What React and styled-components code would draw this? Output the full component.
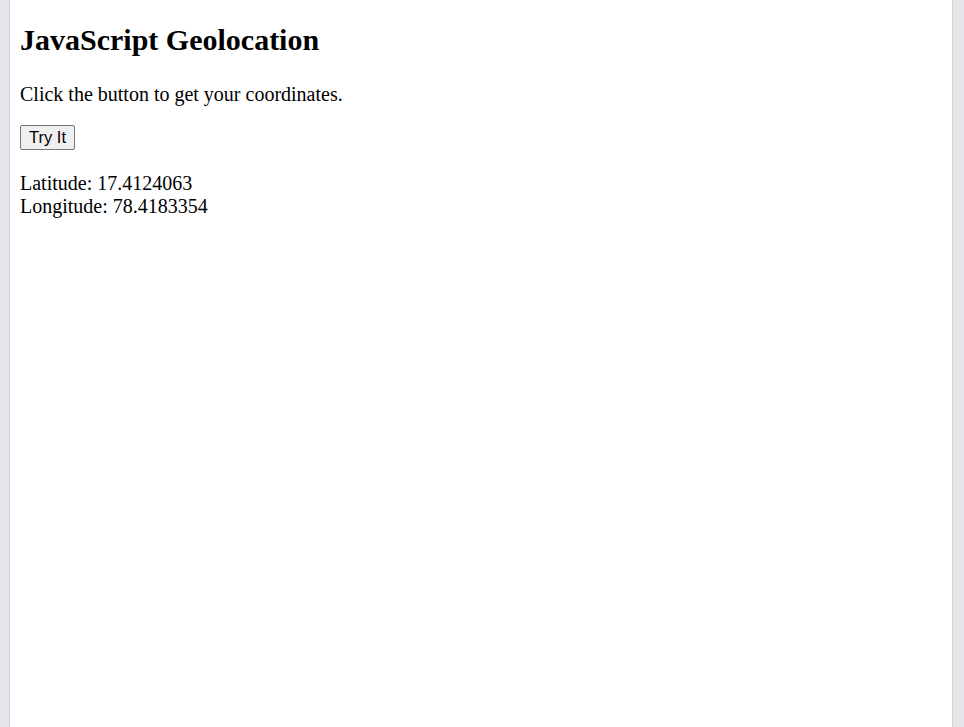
import React, { useState } from 'react';
import styled, { createGlobalStyle } from 'styled-components';

const GlobalStyle = createGlobalStyle`
  html, body {
    margin: 0;
    padding: 0;
    background: #e6e7ea;
  }
`;

const Frame = styled.div`
  display: flex;
  min-height: 100vh;
`;

const Rail = styled.div`
  flex: 0 0 ${props => props.width}px;
  background: #e6e7ea;
  ${props => props.side === 'left' ? 'border-right' : 'border-left'}: 1px solid #d2d3d6;
`;

const Page = styled.main`
  flex: 1;
  background: #ffffff;
  padding: 23px 10px 0 10px;
  font-family: "Liberation Serif", "Times New Roman", serif;
  color: #000;
`;

const Heading = styled.h1`
  margin: 0 0 26px 0;
  font-size: 30px;
  line-height: 34px;
  font-weight: bold;
`;

const Text = styled.p`
  margin: 0 0 19px 0;
  font-size: 20px;
  line-height: 23px;
`;

const TryButton = styled.button`
  display: block;
  height: 25px;
  padding: 0 8px;
  font-family: "Liberation Sans", Arial, sans-serif;
  font-size: 16.5px;
  color: #000;
  background: #efefef;
  border: 1px solid #767676;
  border-radius: 2px;
  cursor: pointer;
  margin-bottom: 22px;
`;

const Coords = styled.p`
  margin: 0;
  font-size: 20px;
  line-height: 23px;
`;

const App = () => {
  const [coords] = useState({ lat: 17.4124063, lng: 78.4183354 });
  const [shown, setShown] = useState(true);

  return (
    <>
      <GlobalStyle />
      <Frame>
        <Rail side="left" width={9} />
        <Page>
          <Heading>JavaScript Geolocation</Heading>
          <Text>Click the button to get your coordinates.</Text>
          <TryButton onClick={() => setShown(true)}>Try It</TryButton>
          {shown && (
            <Coords>
              Latitude: {coords.lat}
              <br />
              Longitude: {coords.lng}
            </Coords>
          )}
        </Page>
        <Rail side="right" width={11} />
      </Frame>
    </>
  );
};

export default App;
